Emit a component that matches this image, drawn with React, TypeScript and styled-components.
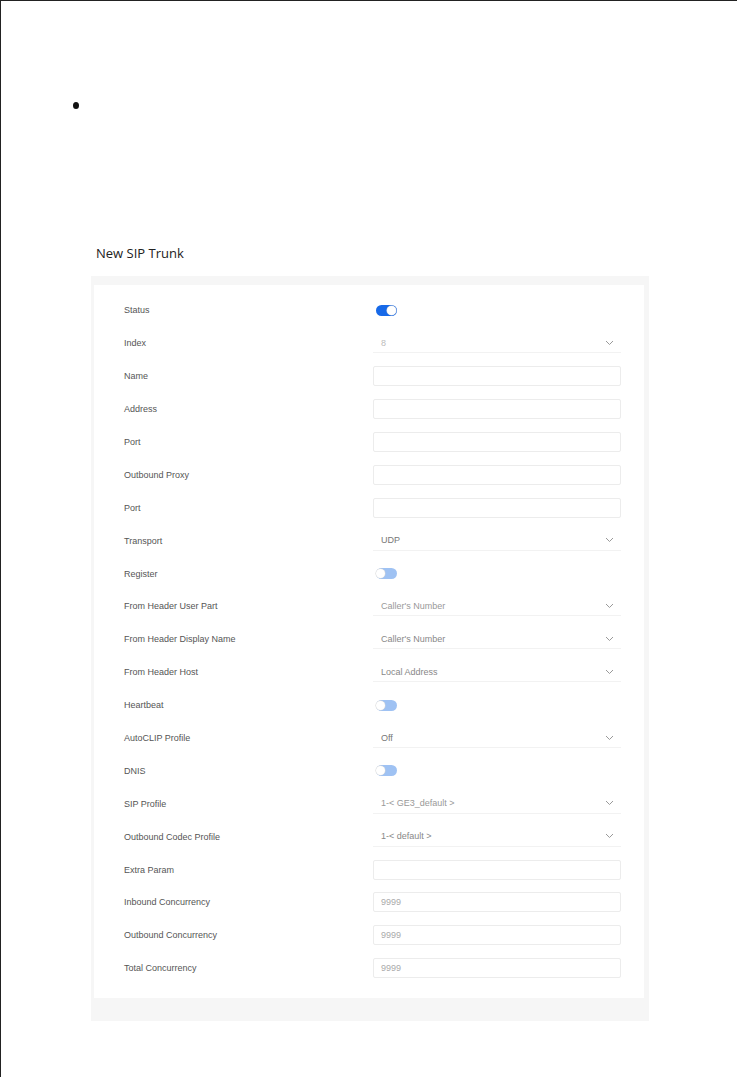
import React from "react";
import styled, { createGlobalStyle } from "styled-components";

const Global = createGlobalStyle`
  html, body { margin: 0; padding: 0; background: #fff; }
  body { font-family: "Liberation Sans", Arial, sans-serif; }
  * { box-sizing: border-box; }
`;

const Page = styled.div`
  min-height: 1077px;
  border-top: 1px solid #222;
  border-left: 1px solid #222;
  padding: 96px 0 0 0;
`;

const BulletList = styled.ul`
  margin: 0;
  padding: 0 0 0 72px;
  height: 20px;
  list-style: none;
`;

const BulletItem = styled.li`
  height: 20px;
  padding-top: 5px;
  &::before {
    content: "";
    display: block;
    width: 6px;
    height: 7px;
    border-radius: 50%;
    background: #111;
  }
`;

const Main = styled.div`
  margin-top: 126px;
  padding-left: 90px;
  width: 648px;
`;

const Title = styled.h2`
  margin: 0 0 0 5px;
  height: 33px;
  font-family: "Open Sans", "Liberation Sans", sans-serif;
  font-weight: 400;
  font-size: 13px;
  line-height: 20px;
  color: #222;
`;

const Panel = styled.div`
  background: #f6f6f6;
  padding: 9px 5px 23px 3px;
`;

const Card = styled.div`
  background: #fff;
  padding: 9px 23px 13px 30px;
  display: flex;
  flex-direction: column;
`;

const Row = styled.div`
  display: flex;
  align-items: center;
  height: 32.9px;
`;

const Label = styled.div`
  width: 249px;
  font-size: 9px;
  color: #555;
`;

const Control = styled.div`
  width: 248px;
  display: flex;
  align-items: center;
`;

const Input = styled.div`
  width: 100%;
  height: 20px;
  border: 1px solid #ececec;
  border-radius: 2px;
  padding: 0 7px;
  display: flex;
  align-items: center;
  font-size: 9px;
  color: #aaa;
`;

const SelectBox = styled.div<{ $tone?: string }>`
  width: 100%;
  height: 20px;
  border-bottom: 1px solid #f2f2f2;
  padding: 0 7px 0 8px;
  display: flex;
  align-items: center;
  justify-content: space-between;
  font-size: 9px;
  color: ${(p) => p.$tone || "#888"};
`;

const Track = styled.div<{ $on: boolean }>`
  margin-left: 3px;
  width: 21px;
  height: 11px;
  border-radius: 6px;
  background: ${(p) => (p.$on ? "#1769e8" : "#9fc2f3")};
  position: relative;
`;

const Knob = styled.span<{ $on: boolean }>`
  position: absolute;
  top: 1px;
  ${(p) => (p.$on ? "right: 1px;" : "left: 0px;")}
  width: 9px;
  height: 9px;
  border-radius: 50%;
  background: #fff;
  box-shadow: 0 0 0 0.5px #d6d6d6;
`;

const Chevron = () => (
  <svg width="9" height="6" viewBox="0 0 9 6">
    <path d="M1 1 L4.5 4.5 L8 1" fill="none" stroke="#999" strokeWidth="1" />
  </svg>
);

type Field =
  | { label: string; kind: "toggle"; on: boolean }
  | { label: string; kind: "select"; value: string; tone?: string }
  | { label: string; kind: "input"; value?: string };

const fields: Field[] = [
  { label: "Status", kind: "toggle", on: true },
  { label: "Index", kind: "select", value: "8", tone: "#bbb" },
  { label: "Name", kind: "input" },
  { label: "Address", kind: "input" },
  { label: "Port", kind: "input" },
  { label: "Outbound Proxy", kind: "input" },
  { label: "Port", kind: "input" },
  { label: "Transport", kind: "select", value: "UDP", tone: "#777" },
  { label: "Register", kind: "toggle", on: false },
  { label: "From Header User Part", kind: "select", value: "Caller's Number", tone: "#999" },
  { label: "From Header Display Name", kind: "select", value: "Caller's Number", tone: "#888" },
  { label: "From Header Host", kind: "select", value: "Local Address", tone: "#888" },
  { label: "Heartbeat", kind: "toggle", on: false },
  { label: "AutoCLIP Profile", kind: "select", value: "Off", tone: "#777" },
  { label: "DNIS", kind: "toggle", on: false },
  { label: "SIP Profile", kind: "select", value: "1-< GE3_default >", tone: "#999" },
  { label: "Outbound Codec Profile", kind: "select", value: "1-< default >", tone: "#888" },
  { label: "Extra Param", kind: "input" },
  { label: "Inbound Concurrency", kind: "input", value: "9999" },
  { label: "Outbound Concurrency", kind: "input", value: "9999" },
  { label: "Total Concurrency", kind: "input", value: "9999" },
];

function renderControl(f: Field) {
  if (f.kind === "toggle") {
    return (
      <Track $on={f.on}>
        <Knob $on={f.on} />
      </Track>
    );
  }
  if (f.kind === "select") {
    return (
      <SelectBox $tone={f.tone}>
        <span>{f.value}</span>
        <Chevron />
      </SelectBox>
    );
  }
  return <Input>{f.value || ""}</Input>;
}

export default function App() {
  return (
    <>
      <Global />
      <Page>
        <BulletList>
          <BulletItem />
        </BulletList>
        <Main>
          <Title>New SIP Trunk</Title>
          <Panel>
            <Card>
              {fields.map((f, i) => (
                <Row key={i}>
                  <Label>{f.label}</Label>
                  <Control>{renderControl(f)}</Control>
                </Row>
              ))}
            </Card>
          </Panel>
        </Main>
      </Page>
    </>
  );
}
